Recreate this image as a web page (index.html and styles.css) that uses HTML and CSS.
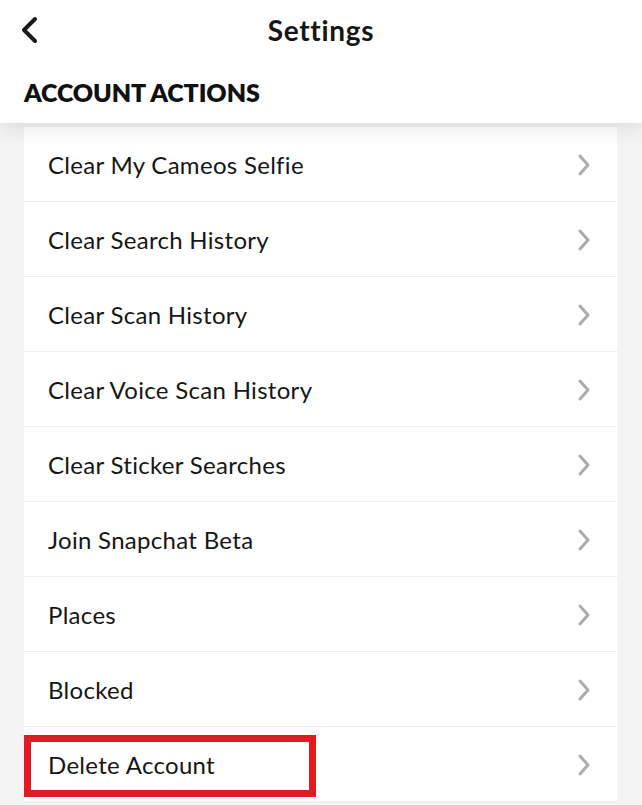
FILE: index.html
```html
<!DOCTYPE html>
<html>
<head>
<meta charset="utf-8">
<link rel="stylesheet" href="styles.css">
</head>
<body>
<div class="screen">
  <header class="header">
    <div class="topbar">
      <svg class="back" width="20" height="30" viewBox="0 0 20 30"><path d="M15 3 L4 14 L15 25" fill="none" stroke="#1a1a1a" stroke-width="4" stroke-linecap="round" stroke-linejoin="round"/></svg>
      <h1 class="title">Settings</h1>
    </div>
    <div class="section">ACCOUNT ACTIONS</div>
  </header>
  <main class="content">
    <ul class="card">
      <li class="row"><span class="label">Clear My Cameos Selfie</span><svg class="chev" width="16" height="26" viewBox="0 0 16 26"><path d="M4 4 L12 13 L4 22" fill="none" stroke="#acacac" stroke-width="3" stroke-linecap="round" stroke-linejoin="round"/></svg></li>
      <li class="row"><span class="label">Clear Search History</span><svg class="chev" width="16" height="26" viewBox="0 0 16 26"><path d="M4 4 L12 13 L4 22" fill="none" stroke="#acacac" stroke-width="3" stroke-linecap="round" stroke-linejoin="round"/></svg></li>
      <li class="row"><span class="label">Clear Scan History</span><svg class="chev" width="16" height="26" viewBox="0 0 16 26"><path d="M4 4 L12 13 L4 22" fill="none" stroke="#acacac" stroke-width="3" stroke-linecap="round" stroke-linejoin="round"/></svg></li>
      <li class="row"><span class="label">Clear Voice Scan History</span><svg class="chev" width="16" height="26" viewBox="0 0 16 26"><path d="M4 4 L12 13 L4 22" fill="none" stroke="#acacac" stroke-width="3" stroke-linecap="round" stroke-linejoin="round"/></svg></li>
      <li class="row"><span class="label">Clear Sticker Searches</span><svg class="chev" width="16" height="26" viewBox="0 0 16 26"><path d="M4 4 L12 13 L4 22" fill="none" stroke="#acacac" stroke-width="3" stroke-linecap="round" stroke-linejoin="round"/></svg></li>
      <li class="row"><span class="label">Join Snapchat Beta</span><svg class="chev" width="16" height="26" viewBox="0 0 16 26"><path d="M4 4 L12 13 L4 22" fill="none" stroke="#acacac" stroke-width="3" stroke-linecap="round" stroke-linejoin="round"/></svg></li>
      <li class="row"><span class="label">Places</span><svg class="chev" width="16" height="26" viewBox="0 0 16 26"><path d="M4 4 L12 13 L4 22" fill="none" stroke="#acacac" stroke-width="3" stroke-linecap="round" stroke-linejoin="round"/></svg></li>
      <li class="row"><span class="label">Blocked</span><svg class="chev" width="16" height="26" viewBox="0 0 16 26"><path d="M4 4 L12 13 L4 22" fill="none" stroke="#acacac" stroke-width="3" stroke-linecap="round" stroke-linejoin="round"/></svg></li>
      <li class="row row-highlight"><span class="label">Delete Account</span><span class="highlight"></span><svg class="chev" width="16" height="26" viewBox="0 0 16 26"><path d="M4 4 L12 13 L4 22" fill="none" stroke="#acacac" stroke-width="3" stroke-linecap="round" stroke-linejoin="round"/></svg></li>
    </ul>
  </main>
</div>
</body>
</html>
```

FILE: styles.css
```css
* { box-sizing: border-box; }
html, body { margin: 0; padding: 0; }
body {
  width: 642px;
  height: 805px;
  overflow: hidden;
  background: #f4f4f4;
  font-family: "Lato", "Noto Sans", sans-serif;
  color: #161616;
}
.screen { display: flex; flex-direction: column; height: 805px; overflow: hidden; }
.header {
  flex-shrink: 0;
  background: #ffffff;
  height: 123px;
  position: relative;
  z-index: 2;
  box-shadow: 0 2px 22px rgba(0,0,0,0.13);
  padding: 0 24px;
}
.topbar {
  height: 60px;
  display: flex;
  align-items: center;
  justify-content: center;
  position: relative;
}
.back { position: absolute; left: -4px; top: 16px; }
.title {
  margin: 0;
  font-size: 28px;
  font-weight: 700;
  letter-spacing: 0.7px;
  color: #161616;
}
.section {
  margin-top: 17px;
  font-size: 25px;
  font-weight: 800;
  letter-spacing: -0.1px;
  color: #111;
}
.content {
  flex: 1;
  min-height: 0;
  overflow: hidden;
  padding: 4px 25px 0 24px;
  background: #f4f4f4;
}
.card {
  list-style: none;
  margin: 0;
  padding: 0;
  background: #ffffff;
}
.row {
  height: 75px;
  display: flex;
  align-items: center;
  justify-content: space-between;
  padding: 0 25px 0 24px;
  border-bottom: 1.5px solid #ececec;
  position: relative;
}
.label {
  font-size: 24px;
  font-weight: 400;
  letter-spacing: 0.3px;
}
.chev { display: block; margin-top: 2px; }
.highlight {
  position: absolute;
  left: 0;
  top: 8px;
  width: 292px;
  height: 62px;
  border: 7px solid #e01b24;
  pointer-events: none;
}
```
